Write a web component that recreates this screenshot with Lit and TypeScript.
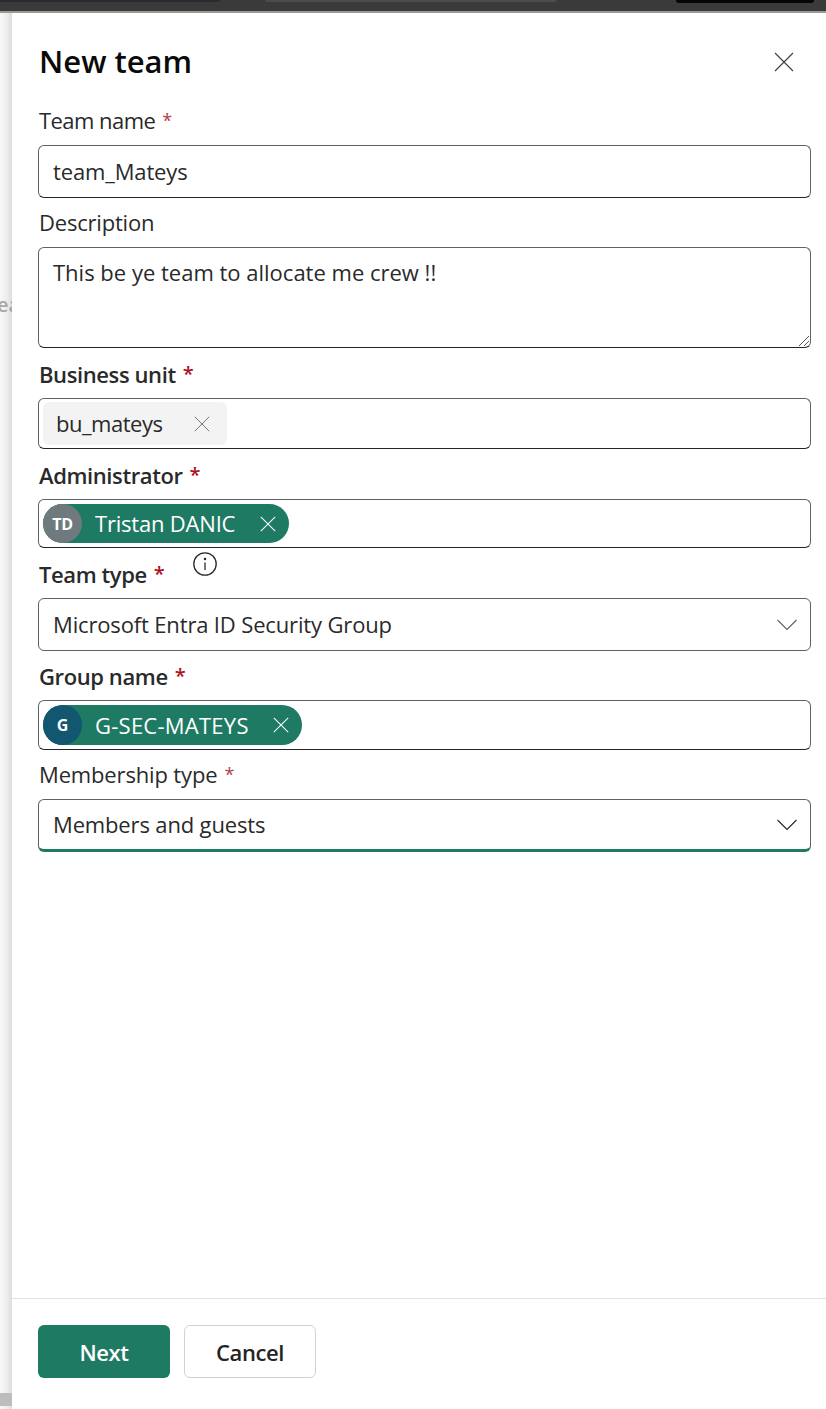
import { LitElement, html, css, svg } from "lit";
import { customElement } from "lit/decorators.js";

const x = (size: number, stroke: string, w = 1) => html`<svg width=${size} height=${size} viewBox="0 0 20 20" fill="none" stroke=${stroke} stroke-width=${w}>${svg`<path d="M1 1 L19 19 M19 1 L1 19"/>`}</svg>`;
const chevron = (stroke: string) => html`<svg class="chev" width="20" height="12" viewBox="0 0 20 12" fill="none" stroke=${stroke} stroke-width="1.1">${svg`<path d="M0.5 1 L10 10.5 L19.5 1"/>`}</svg>`;

@customElement("app-root")
export class AppRoot extends LitElement {
  static styles = css`
    :host { display: flex; flex-direction: column; width: 826px; height: 1409px; overflow: hidden; background: #fff;
      font-family: "Open Sans", "Noto Sans", sans-serif; color: #242424; font-size: 22px; }
    .top { flex: none; height: 13px; box-sizing: border-box; background: #3a3a3a; border-bottom: 2px solid #9a9a9a; display: flex; align-items: flex-start; }
    .t1 { width: 220px; height: 2px; background: #2a2a32; border-radius: 0 0 8px 0; }
    .t2 { width: 292px; height: 2px; background: #4c4c4c; margin-left: 45px; border-radius: 0 0 8px 8px; }
    .t3 { width: 138px; height: 3px; background: #050505; margin-left: 119px; border-radius: 0 0 8px 8px; }
    .main { flex: 1; display: flex; min-height: 0; }
    .strip { flex: none; width: 12px; position: relative; overflow: hidden; display: flex; flex-direction: column;
      background: linear-gradient(90deg, #f8f8f8 0%, #ececec 60%, #dcdcdc 100%); }
    .strip .ea { position: absolute; left: -3px; top: 278px; color: #a8a8a8; font-size: 20px; line-height: 28px; font-weight: 600; }
    .strip .sb { position: absolute; left: 0; right: 0; bottom: 3px; height: 13px; background: #bdbdbd; }
    .panel { flex: 1; display: flex; flex-direction: column; min-width: 0; background: #fff; }
    .body { flex: 1; padding: 0 15px 0 26px; min-height: 0; }
    .head { display: flex; align-items: center; justify-content: space-between; height: 98px; box-sizing: border-box; padding-bottom: 2px; }
    h1 { margin: 0; padding-left: 1px; font-size: 31px; font-weight: 600; color: #0a0a0a; line-height: 40px; }
    .close { margin-right: 17px; display: flex; padding-top: 2px; }
    .label { display: flex; align-items: center; height: 49px; padding-left: 1px; font-size: 22px; line-height: 28px; color: #2a2a2a; letter-spacing: -0.2px; box-sizing: border-box; padding-bottom: 1px; position: relative; }
    .first { height: 45px; padding-bottom: 5px; margin-top: -11px; letter-spacing: -0.55px; }
    .tall { height: 50px; }
    .bold { font-weight: 600; letter-spacing: -0.4px; padding-bottom: 0; padding-top: 1px; }
    .wide { letter-spacing: -0.15px; }
    .star { color: #b10e1c; margin-left: 7px; font-size: 20px; }
    .star.light { color: #b5404a; font-size: 18px; }
    .info { position: absolute; left: 155px; top: 4px; display: flex; }
    .box { box-sizing: border-box; border: 1px solid #616161; border-bottom-color: #242424; border-radius: 6px; display: flex; align-items: center; padding: 0 14px; font-size: 22px; letter-spacing: -0.15px; color: #2a2a2a; background: #fff; }
    .h53 { height: 53px; padding-bottom: 2px; }
    .area { height: 101px; align-items: flex-start; padding-top: 8px; position: relative; line-height: 32px; letter-spacing: 0; }
    .grip { position: absolute; right: 0; bottom: 0; display: flex; }
    .select { justify-content: space-between; padding-right: 13px; border-bottom-color: #616161; }
    .chev { margin-top: 2px; }
    .focus { position: relative; border-bottom: 3px solid #1f7a63; padding-bottom: 1px; }
    .focus .chev { margin-top: 1px; }
    .tags { padding: 0 4px; }
    .h51 { height: 51px; }
    .h49 { height: 49px; }
    .h50 { height: 50px; }
    .tag { display: flex; align-items: center; height: 43px; background: #f3f3f3; border-radius: 6px; padding: 0 17px 0 13px; width: 184px; box-sizing: border-box; justify-content: space-between; letter-spacing: -0.5px; }
    .tag span { margin-top: -1px; }
    .pill { display: flex; align-items: center; height: 39px; background: #1f7a63; color: #fff; border-radius: 20px; box-sizing: border-box; padding-right: 13px; }
    .h40 { height: 40px; }
    .av { width: 39px; height: 100%; border-radius: 50%; flex: none; display: flex; align-items: center; justify-content: center; font-size: 16px; font-weight: 700; color: #fff; letter-spacing: -0.3px; }
    .gray { background: #6f7a7e; }
    .blue { background: #13566f; }
    .name { margin-left: 13px; margin-right: 25px; margin-top: -1px; letter-spacing: -0.2px; }
    .name.caps { letter-spacing: 0.25px; margin-right: 24px; margin-top: 0; }
    .foot { flex: none; height: 111px; border-top: 1px solid #e0e0e0; box-sizing: border-box; display: flex; padding: 26px 0 0 26px; gap: 14px; align-items: flex-start; }
    .btn { box-sizing: border-box; width: 132px; height: 53px; border-radius: 6px; display: flex; align-items: center; justify-content: center; font-size: 22px; font-weight: 600; letter-spacing: -0.4px; }
    .primary { background: #1f7a63; color: #fff; }
    .secondary { background: #fff; border: 1px solid #d1d1d1; color: #242424; }
  `;

  render() {
    return html`
      <div class="top"><div class="t1"></div><div class="t2"></div><div class="t3"></div></div>
      <div class="main">
        <div class="strip"><span class="ea">ea</span><div class="sb"></div></div>
        <div class="panel">
          <div class="body">
            <div class="head"><h1>New team</h1><span class="close">${x(20, "#424242", 1.2)}</span></div>
            <div class="label first">Team name<span class="star light">*</span></div>
            <div class="box h53">team_Mateys</div>
            <div class="label">Description</div>
            <div class="box area">This be ye team to allocate me crew !!
              <span class="grip"><svg width="12" height="12" viewBox="0 0 12 12" fill="none" stroke="#555" stroke-width="1">${svg`<path d="M1 11 L11 1 M6 11 L11 6"/>`}</svg></span>
            </div>
            <div class="label tall bold">Business unit<span class="star">*</span></div>
            <div class="box tags h51"><div class="tag"><span>bu_mateys</span>${x(16, "#555")}</div></div>
            <div class="label tall bold">Administrator<span class="star">*</span></div>
            <div class="box tags h49"><div class="pill"><span class="av gray">TD</span><span class="name">Tristan DANIC</span>${x(16, "#fff", 1.3)}</div></div>
            <div class="label tall bold">Team type<span class="star">*</span>
              <span class="info"><svg width="24" height="24" viewBox="0 0 24 24" fill="none" stroke="#2a2a2a" stroke-width="1.3">${svg`<circle cx="12" cy="12" r="11.2"/><path d="M12 10.5V18"/><circle cx="12" cy="7" r="0.6" fill="#2a2a2a"/>`}</svg></span>
            </div>
            <div class="box h53 select">Microsoft Entra ID Security Group${chevron("#616161")}</div>
            <div class="label bold">Group name<span class="star">*</span></div>
            <div class="box tags h50"><div class="pill h40"><span class="av blue">G</span><span class="name caps">G-SEC-MATEYS</span>${x(16, "#fff", 1.3)}</div></div>
            <div class="label wide">Membership type<span class="star light">*</span></div>
            <div class="box h53 select focus">Members and guests${chevron("#242424")}</div>
          </div>
          <div class="foot"><div class="btn primary">Next</div><div class="btn secondary">Cancel</div></div>
        </div>
      </div>
    `;
  }
}
